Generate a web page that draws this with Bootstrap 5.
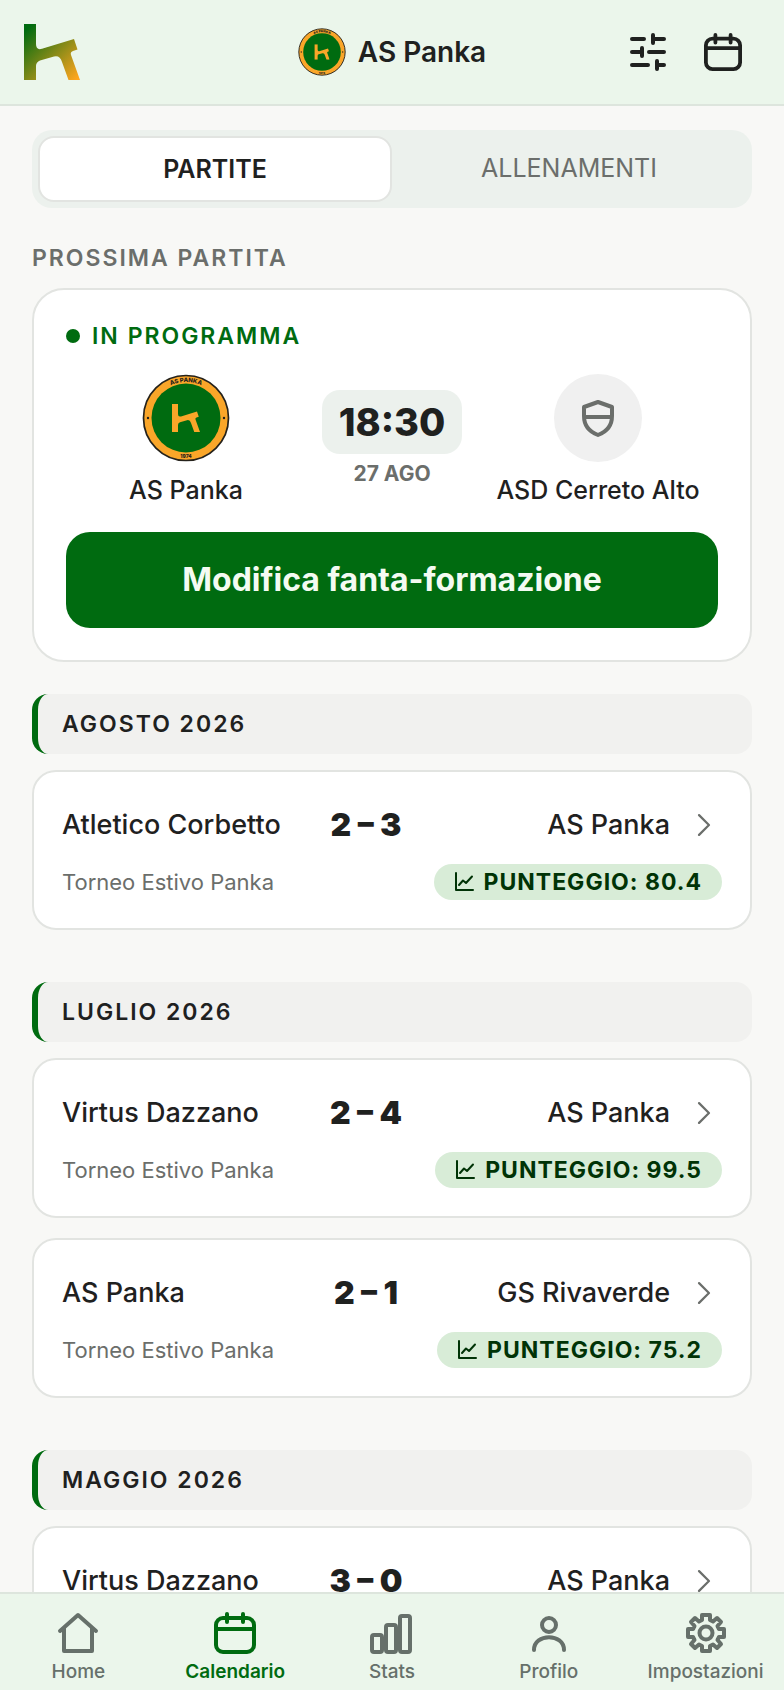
<!DOCTYPE html>
<html lang="it">
<head>
    <meta charset="UTF-8">
    <meta name="viewport" content="width=device-width, initial-scale=1.0">
    <title>AS Panka - Calendario</title>
    <link href="https://cdn.jsdelivr.net/npm/bootstrap@5.3.0/dist/css/bootstrap.min.css" rel="stylesheet">
    <style>
        :root {
            --verde: #006b10;
            --scuro: #1f211f;
            --grigio: #6b6e6b;
            --bordo: #e2e4e1;
            --barra: #ebf6eb;
        }
        body {
            font-family: Inter, "Liberation Sans", sans-serif;
            background: #f8f8f6;
            color: var(--scuro);
            font-size: 26px;
            line-height: 32px;
        }
        svg { display: block; flex-shrink: 0; }
        .tratto { fill: none; stroke: currentColor; stroke-linecap: round; stroke-linejoin: round; }

        /* Barra superiore */
        .topbar { background: var(--barra); border-bottom: 2px solid #dde5dd; padding: 24px; }
        .topbar .lato-bar { flex: 1 1 0; }
        .squadra { font-size: 28px; font-weight: 600; margin: 0; line-height: 32px; }
        .icona-btn { background: none; border: 0; padding: 0; margin-right: 18px; color: var(--scuro); }
        .icona-btn + .icona-btn { margin-left: 20px; }

        /* Contenuto */
        .contenuto { flex: 1 1 0; overflow-y: auto; scrollbar-width: none; padding: 24px 32px; }
        .contenuto::-webkit-scrollbar { display: none; }
        .schede { background: #ecf1ed; border-radius: 20px; padding: 6px; margin-bottom: 32px; }
        .schede .nav-link { background: transparent; border: 2px solid transparent; border-radius: 16px; color: var(--grigio); font-size: 25px; line-height: 30px; padding: 15px 16px 17px; }
        .schede .nav-link.active { background: #fff; border-color: var(--bordo); color: var(--scuro); font-weight: 600; padding: 16px; }
        .titoletto { font-size: 23px; line-height: 28px; font-weight: 600; letter-spacing: 2px; margin: 0; }
        .riquadro { background: #fff; border: 2px solid var(--bordo); border-radius: 24px; }

        /* Prossima partita */
        .prossima { border-radius: 32px; padding: 32px; }
        .verde { color: var(--verde); }
        .grigio { color: var(--grigio); }
        .pallino { width: 14px; height: 14px; border-radius: 50%; background: var(--verde); }
        .stemma-vuoto { width: 88px; height: 88px; border-radius: 50%; background: #f0f0f0; color: var(--grigio); }
        .nome { font-size: 25px; line-height: 32px; font-weight: 500; margin-top: 12px; }
        .orario { background: #ecf1ed; border-radius: 18px; padding: 8px 12px; font-size: 38px; line-height: 48px; font-weight: 800; }
        .giorno { font-size: 21px; line-height: 24px; font-weight: 700; margin-top: 8px; }
        .sfida { display: grid; grid-template-columns: 1fr 140px 1fr; column-gap: 16px; margin: 24px 0 26px; }
        .btn-fanta { --bs-btn-color: #f4fbf2; --bs-btn-bg: var(--verde); --bs-btn-hover-color: #fff; --bs-btn-hover-bg: #00560d; --bs-btn-active-bg: #00560d; --bs-btn-active-color: #fff; border: 0; border-radius: 24px; padding: 28px; font-size: 32px; line-height: 40px; font-weight: 700; }

        /* Elenco partite */
        .mese { background: #f1f1ef; border-left: 6px solid var(--verde); border-radius: 16px; padding: 16px 24px; margin-bottom: 16px; }
        .gruppo { margin-top: 32px; }
        .gruppo + .gruppo { margin-top: 52px; }
        .partita { display: block; color: var(--scuro); text-decoration: none; padding: 28px; }
        .partita + .partita { margin-top: 20px; }
        .incontro { display: grid; grid-template-columns: 1fr auto 1fr 52px; align-items: center; height: 50px; font-size: 27px; font-weight: 500; }
        .risultato { font-size: 32px; font-weight: 900; }
        .freccia { margin: 0 6px 0 auto; }
        .torneo { font-size: 22px; line-height: 28px; }
        .dettagli { margin-top: 14px; }
        .punti { background: #d8ecd7; color: #003306; border-radius: 18px; padding: 4px 20px; font-size: 23px; line-height: 28px; font-weight: 700; letter-spacing: 1px; gap: 10px; }

        /* Barra inferiore */
        .tabbar { background: var(--barra); border-top: 2px solid #dde5dd; padding: 16px 0 6px; }
        .voce { flex: 1 1 0; min-width: 0; color: #66706a; text-decoration: none; font-size: 19px; line-height: 24px; font-weight: 500; }
        .voce.attiva { color: var(--verde); font-weight: 600; }
        .voce .testo { margin-top: 2px; white-space: nowrap; }
    </style>
</head>
<body>

<!-- Simboli condivisi -->
<svg class="d-none" aria-hidden="true">
    <symbol id="kappa" viewBox="0 0 56 56">
        <path d="M0 0H12V20Q12 26.500 18 24.800L50 15L53.500 25.500L49 27Q46 28 47 31L56 56H44.500L38 38Q36 31 30 32.500L16 36.500Q12 38 12 42V56H0Z"/>
    </symbol>
    <symbol id="stemma" viewBox="0 0 88 88">
        <circle cx="44" cy="44" r="42.500" fill="#faa629" stroke="#25221b" stroke-width="1.700"/>
        <circle cx="44" cy="44" r="34.500" fill="#006b10"/>
        <circle cx="6" cy="44" r="1.200" fill="#25221b"/>
        <circle cx="82" cy="44" r="1.200" fill="#25221b"/>
        <use href="#kappa" x="30" y="30" width="28" height="28" fill="#faa629"/>
        <path id="arco" d="M8 44A36 36 0 0 1 80 44" fill="none"/>
        <text font-size="6" font-weight="800" fill="#25221b" text-anchor="middle"><textPath href="#arco" startOffset="50%">AS PANKA</textPath></text>
        <text x="44" y="84" font-size="5" font-weight="800" fill="#25221b" text-anchor="middle">1974</text>
    </symbol>
    <symbol id="calendario" viewBox="0 0 40 40">
        <rect x="2" y="6" width="36" height="32" rx="7"/>
        <path d="M2 16H38M12 2V10M28 2V10"/>
    </symbol>
    <symbol id="grafico" viewBox="0 0 20 20">
        <path d="M2 1V18H19M5 13L9 8.500L12 11L18 4.500"/>
    </symbol>
    <symbol id="freccia" viewBox="0 0 12 20">
        <path d="M1.500 1L10.500 10L1.500 19"/>
    </symbol>
</svg>

<div class="vh-100 d-flex flex-column overflow-hidden">
    <header class="topbar d-flex align-items-center">
        <div class="lato-bar">
            <svg width="56" height="56" viewBox="0 0 56 56" role="img" aria-label="Logo">
                <linearGradient id="sfuma" gradientUnits="userSpaceOnUse" x1="4" y1="4" x2="54" y2="54">
                    <stop offset="0" stop-color="#006b10"/>
                    <stop offset="1" stop-color="#ffa61f"/>
                </linearGradient>
                <use href="#kappa" width="56" height="56" fill="url(#sfuma)"/>
            </svg>
        </div>
        <div class="d-flex align-items-center">
            <svg class="me-2" width="48" height="48" aria-hidden="true"><use href="#stemma"/></svg>
            <h1 class="squadra ms-1">AS Panka</h1>
        </div>
        <div class="lato-bar d-flex justify-content-end">
            <button type="button" class="icona-btn" aria-label="Filtri">
                <svg class="tratto" width="36" height="38" viewBox="0 0 36 38" stroke-width="4"><path d="M2 6H14M23 6H34M23 2V10M2 19H12M12 15V23M19 19H34M2 32H18M27 32H34M27 28V36"/></svg>
            </button>
            <button type="button" class="icona-btn" aria-label="Calendario">
                <svg class="tratto" width="38" height="38" stroke-width="4"><use href="#calendario"/></svg>
            </button>
        </div>
    </header>

    <main class="contenuto">
        <div class="schede nav nav-fill flex-nowrap" role="tablist">
            <button type="button" class="nav-link active w-50" role="tab" aria-selected="true">PARTITE</button>
            <button type="button" class="nav-link w-50" role="tab" aria-selected="false">ALLENAMENTI</button>
        </div>

        <h2 class="titoletto grigio pt-1 mb-3">PROSSIMA PARTITA</h2>
        <section class="riquadro prossima">
            <div class="titoletto verde d-flex align-items-center gap-2">
                <span class="pallino"></span>
                <span class="ms-1">IN PROGRAMMA</span>
            </div>
            <div class="sfida text-center">
                <div class="d-flex flex-column align-items-center">
                    <svg width="88" height="88" aria-hidden="true"><use href="#stemma"/></svg>
                    <div class="nome">AS Panka</div>
                </div>
                <div class="pt-3">
                    <div class="orario">18:30</div>
                    <div class="giorno grigio">27 AGO</div>
                </div>
                <div class="d-flex flex-column align-items-center">
                    <div class="stemma-vuoto d-flex align-items-center justify-content-center">
                        <svg class="tratto" width="32" height="38" viewBox="0 0 32 38" stroke-width="4"><path d="M16 3L30 8V17C30 27 24 33 16 36C8 33 2 27 2 17V8ZM2 18H30"/></svg>
                    </div>
                    <div class="nome text-nowrap">ASD Cerreto Alto</div>
                </div>
            </div>
            <button type="button" class="btn btn-fanta w-100">Modifica fanta-formazione</button>
        </section>

        <section class="gruppo">
            <h2 class="titoletto mese">AGOSTO 2026</h2>
            <a href="#" class="riquadro partita">
                <div class="incontro">
                    <span>Atletico Corbetto</span>
                    <span class="risultato">2 – 3</span>
                    <span class="text-end">AS Panka</span>
                    <svg class="tratto grigio freccia" width="24" height="22" stroke-width="2"><use href="#freccia"/></svg>
                </div>
                <div class="dettagli d-flex align-items-center justify-content-between">
                    <span class="torneo grigio">Torneo Estivo Panka</span>
                    <span class="punti d-flex align-items-center"><svg class="tratto" width="20" height="20" stroke-width="2"><use href="#grafico"/></svg>PUNTEGGIO: 80.4</span>
                </div>
            </a>
        </section>

        <section class="gruppo">
            <h2 class="titoletto mese">LUGLIO 2026</h2>
            <a href="#" class="riquadro partita">
                <div class="incontro">
                    <span>Virtus Dazzano</span>
                    <span class="risultato">2 – 4</span>
                    <span class="text-end">AS Panka</span>
                    <svg class="tratto grigio freccia" width="24" height="22" stroke-width="2"><use href="#freccia"/></svg>
                </div>
                <div class="dettagli d-flex align-items-center justify-content-between">
                    <span class="torneo grigio">Torneo Estivo Panka</span>
                    <span class="punti d-flex align-items-center"><svg class="tratto" width="20" height="20" stroke-width="2"><use href="#grafico"/></svg>PUNTEGGIO: 99.5</span>
                </div>
            </a>
            <a href="#" class="riquadro partita">
                <div class="incontro">
                    <span>AS Panka</span>
                    <span class="risultato">2 – 1</span>
                    <span class="text-end">GS Rivaverde</span>
                    <svg class="tratto grigio freccia" width="24" height="22" stroke-width="2"><use href="#freccia"/></svg>
                </div>
                <div class="dettagli d-flex align-items-center justify-content-between">
                    <span class="torneo grigio">Torneo Estivo Panka</span>
                    <span class="punti d-flex align-items-center"><svg class="tratto" width="20" height="20" stroke-width="2"><use href="#grafico"/></svg>PUNTEGGIO: 75.2</span>
                </div>
            </a>
        </section>

        <section class="gruppo">
            <h2 class="titoletto mese">MAGGIO 2026</h2>
            <a href="#" class="riquadro partita">
                <div class="incontro">
                    <span>Virtus Dazzano</span>
                    <span class="risultato">3 – 0</span>
                    <span class="text-end">AS Panka</span>
                    <svg class="tratto grigio freccia" width="24" height="22" stroke-width="2"><use href="#freccia"/></svg>
                </div>
            </a>
        </section>
    </main>

    <nav class="tabbar d-flex text-center" aria-label="Navigazione principale">
        <a href="#" class="voce">
            <svg class="tratto mx-auto" width="44" height="48" viewBox="0 0 44 48" stroke-width="4"><path d="M4 21L22 5L40 21M8 18V41H36V18"/></svg>
            <div class="testo">Home</div>
        </a>
        <a href="#" class="voce attiva" aria-current="page">
            <svg class="tratto mx-auto" width="44" height="48" viewBox="0 0 44 48" stroke-width="4"><rect x="3" y="8" width="38" height="34" rx="7"/><path d="M3 19H41M14 4V12M30 4V12"/></svg>
            <div class="testo">Calendario</div>
        </a>
        <a href="#" class="voce">
            <svg class="tratto mx-auto" width="44" height="48" viewBox="0 0 44 48" stroke-width="4"><rect x="2" y="25" width="10" height="17" rx="2"/><rect x="16" y="15" width="10" height="27" rx="2"/><rect x="30" y="6" width="10" height="36" rx="2"/></svg>
            <div class="testo">Stats</div>
        </a>
        <a href="#" class="voce">
            <svg class="tratto mx-auto" width="44" height="48" viewBox="0 0 44 48" stroke-width="4"><circle cx="22" cy="15" r="7"/><path d="M7 40C7 23 37 23 37 40"/></svg>
            <div class="testo">Profilo</div>
        </a>
        <a href="#" class="voce">
            <svg class="tratto mx-auto" width="44" height="48" viewBox="0 0 44 48" stroke-width="4"><circle cx="22" cy="23" r="6.500"/><path d="M18 5H26V10L29 11.500L33 8L37 12L33.500 16L35 19H40V27H35L33.500 30L37 34L33 38L29 34.500L26 36V41H18V36L15 34.500L11 38L7 34L10.500 30L9 27H4V19H9L10.500 16L7 12L11 8L15 11.500L18 10Z"/></svg>
            <div class="testo">Impostazioni</div>
        </a>
    </nav>
</div>

<script src="https://cdn.jsdelivr.net/npm/bootstrap@5.3.0/dist/js/bootstrap.bundle.min.js"></script>
</body>
</html>
